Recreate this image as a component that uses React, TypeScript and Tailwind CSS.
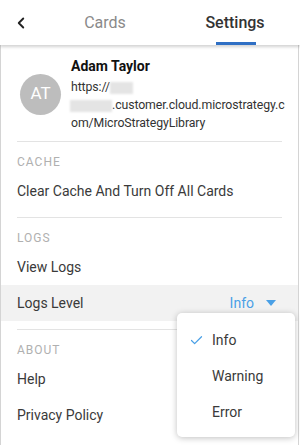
import { Check, ChevronLeft } from "lucide-react";

const Divider = () => <div className="mx-[16px] h-px bg-[#e3e3e3]" />;

const SectionTitle = ({ title }: { title: string }) => (
  <div className="pl-[16px] pt-[13px] pb-[4px] text-[12px] leading-[14px] tracking-[1px] text-[#b0b0b0]">
    {title}
  </div>
);

const Row = ({ label }: { label: string }) => (
  <div className="flex h-[36px] items-center pl-[16px] text-[14px] text-[#3a3a3a]">{label}</div>
);

const Blur = ({ w }: { w: string }) => (
  <span className={`inline-block h-[12px] align-middle bg-[#e4e4e4] blur-[1px] ${w}`} />
);

const levels = ["Info", "Warning", "Error"];

export default function App() {
  return (
    <div
      className="relative h-[445px] w-[300px] overflow-hidden bg-white"
      style={{ fontFamily: "Roboto, 'Liberation Sans', sans-serif" }}
    >
      {/* header */}
      <div className="relative z-10 flex h-[45px] items-center bg-white shadow-[0_2px_3px_rgba(0,0,0,0.18)]">
        <div className="flex w-[40px] justify-center pl-[2px]">
          <ChevronLeft size={18} strokeWidth={2.5} className="text-[#222]" />
        </div>
        <div className="flex flex-1 justify-center text-[16px] text-[#8a8a8a]">Cards</div>
        <div className="relative flex h-full flex-1 items-center justify-center text-[16px] font-medium text-[#333]">
          Settings
          <div className="absolute bottom-0 left-1/2 h-[3px] w-[40px] -translate-x-[19px] bg-[#2f6fc4]" />
        </div>
      </div>

      {/* content */}
      <div className="h-[400px] w-[299px] border-x border-[#d4d4d4]">
        <div className="flex items-center gap-[10px] pt-[11px] pb-[9px] pl-[19px]">
          <div className="flex h-[41px] w-[41px] shrink-0 items-center justify-center rounded-full bg-[#bdbdbd] text-[17px] text-white">
            AT
          </div>
          <div className="text-[12.3px] leading-[18px] tracking-[-0.1px] text-[#333]">
            <div className="mb-[2px] text-[14px] leading-[20px] font-bold tracking-normal text-[#111]">Adam Taylor</div>
            <div>
              https://
              <Blur w="w-[23px]" />
            </div>
            <div className="-ml-[1px]">
              <Blur w="w-[42px]" />
              .customer.cloud.microstrategy.c
            </div>
            <div>om/MicroStrategyLibrary</div>
          </div>
        </div>
        <Divider />

        <SectionTitle title="CACHE" />
        <Row label="Clear Cache And Turn Off All Cards" />
        <div className="h-[8px]" />
        <Divider />

        <SectionTitle title="LOGS" />
        <Row label="View Logs" />
        <div className="flex h-[36px] items-center justify-between bg-[#f2f2f2] pr-[22px] pl-[16px] text-[14px] text-[#3a3a3a]">
          <span>Logs Level</span>
          <span className="flex items-center gap-[12px] text-[#4aa0e6]">
            Info
            <svg width="10" height="6" viewBox="0 0 10 6">
              <path d="M0 0h10L5 6z" fill="#4aa0e6" />
            </svg>
          </span>
        </div>
        <div className="h-[8px]" />
        <Divider />

        <SectionTitle title="ABOUT" />
        <Row label="Help" />
        <Row label="Privacy Policy" />
        <Row label="Terms of Use" />
      </div>

      {/* level menu */}
      <div className="absolute top-[313px] left-[177px] w-[118px] rounded-[5px] bg-white pt-[9px] pb-[7px] shadow-[0_1px_6px_rgba(0,0,0,0.25)]">
        {levels.map((level) => (
          <div key={level} className="flex h-[36px] items-center text-[14px] text-[#3a3a3a]">
            <div className="flex w-[35px] justify-end pr-[8px]">
              {level === "Info" && <Check size={15} strokeWidth={2} className="text-[#4aa0e6]" />}
            </div>
            {level}
          </div>
        ))}
      </div>
    </div>
  );
}
